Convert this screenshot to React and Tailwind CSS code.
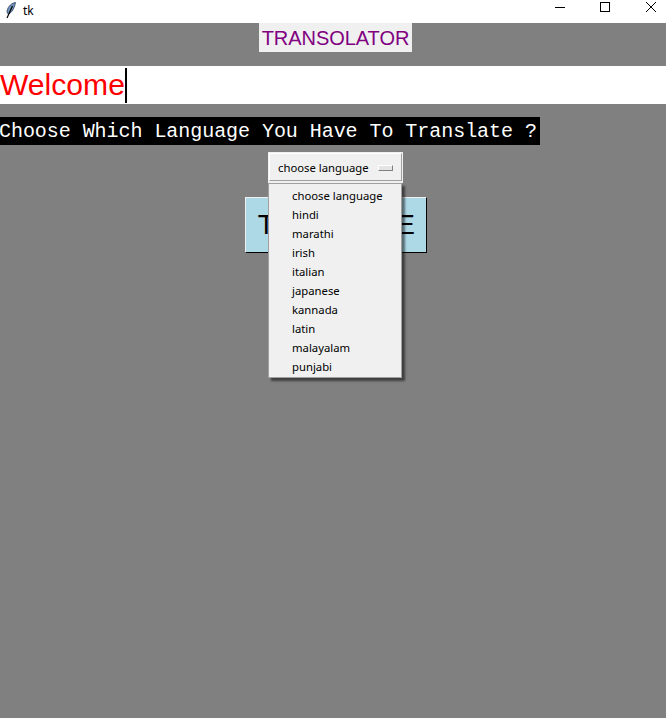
const items = ["choose language","hindi","marathi","irish","italian","japanese","kannada","latin","malayalam","punjabi"];
const ui = "font-['Noto_Sans','Open_Sans',sans-serif] text-[11.3px]";

export default function App() {
  return (
    <div className="w-[666px] h-[718px] bg-[#808080] flex flex-col overflow-hidden relative">
      <div className="h-[23px] bg-white flex items-center shrink-0 relative">
        <svg width="12" height="17" viewBox="0 0 12 17" className="ml-[4px] mb-[3px]">
          <path d="M11.5 0.5C8 1 4 4 3 9C3 10.5 3.5 12 4.5 12C8 10.5 10.5 6 11.5 0.5Z" fill="#6f93bd" stroke="#1f2d44" strokeWidth="0.7" />
          <path d="M8.5 4L3 16" stroke="#000" strokeWidth="1.2" />
        </svg>
        <span className="font-['Noto_Sans',sans-serif] text-[12px] ml-[7px] text-black leading-none mb-[1px]">tk</span>
        <div className="ml-auto flex items-start h-full">
          <svg width="116" height="23" viewBox="0 0 116 23" fill="none" stroke="#000">
            <path d="M5 7.5H15" />
            <rect x="50.5" y="2.5" width="9" height="9" />
            <path d="M96 2L106 12M106 2L96 12" />
          </svg>
        </div>
      </div>

      <div className="self-center ml-[5px] w-[153px] h-[29px] bg-[#f0f0f0] flex items-center justify-center font-['Liberation_Sans',sans-serif] text-[20px] tracking-[-0.05px] text-[#800080] leading-none">
        TRANSOLATOR
      </div>

      <div className="mt-[14px] h-[38px] bg-white flex items-center font-['Liberation_Sans',sans-serif] text-[30.1px] text-[#ff0000] leading-none">
        <span>Welcome</span>
        <span className="w-[2px] h-[35px] bg-black"></span>
      </div>

      <div className="mt-[13px] w-[540px] h-[28px] bg-black text-white pt-[3px] indent-[-1px] font-['Liberation_Mono',monospace] font-normal text-[20px] tracking-[-0.05px] leading-[23px] whitespace-nowrap">
        Choose Which Language You Have To Translate ?
      </div>

      <div className="self-center mt-[7px] ml-[5px] w-[135px] h-[31px] bg-[#f0f0f0] p-[1px] pb-[2px]">
        <div className={`${ui} h-full bg-[#f0f0f0] border border-[#a0a0a0] border-t-white border-l-white flex items-center pl-[8px] pt-[2px] text-black`}>
          <span>choose language</span>
          <span className="ml-auto mr-[8px] w-[15px] h-[6px] bg-[#e4e4e4] border border-[#808080] border-t-white border-l-white"></span>
        </div>
      </div>

      <div className="self-center mt-[14px] ml-[6px] w-[182px] h-[56px] bg-[#add8e6] border border-[#f0f0f0] border-r-black border-b-black flex items-center justify-center font-['Liberation_Sans',sans-serif] text-[28px] tracking-[-0.7px] text-black leading-none">
        TRANSLATE
      </div>

      <div className={`${ui} absolute left-[268px] top-[183px] w-[134px] h-[195px] bg-[#f0f0f0] border border-[#a0a0a0] shadow-[3px_3px_2px_rgba(0,0,0,0.5)] pt-[2px] text-black`}>
        {items.map((t) => (
          <div key={t} className="h-[19px] pl-[23px] flex items-center leading-none">{t}</div>
        ))}
      </div>
    </div>
  );
}
